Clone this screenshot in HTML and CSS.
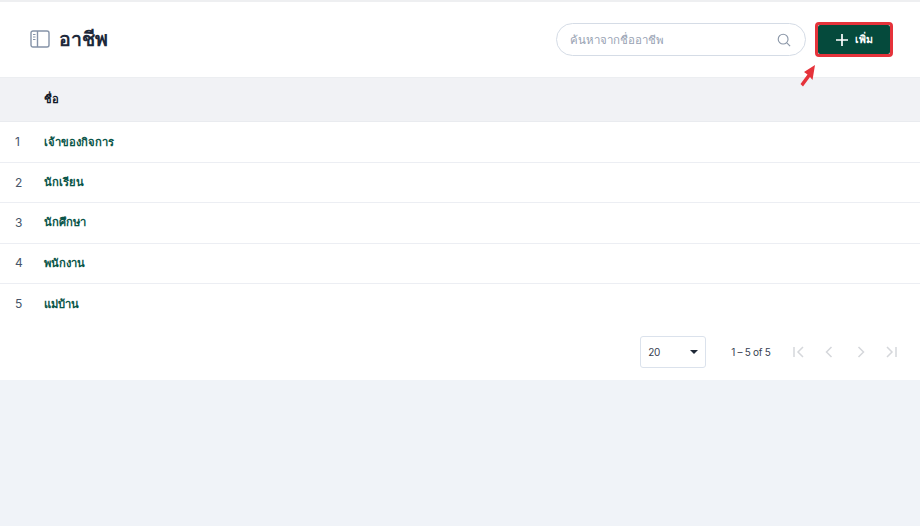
FILE: index.html
```html
<!DOCTYPE html>
<html lang="th">
<head>
<meta charset="utf-8">
<title>อาชีพ</title>
<link rel="stylesheet" href="styles.css">
</head>
<body>
<main class="panel">
  <header class="toolbar">
    <div class="title-wrap">
      <svg class="title-icon" width="20" height="18" viewBox="0 0 20 18" fill="none" stroke="#8593a8" stroke-width="1.4">
        <rect x="1" y="1" width="18" height="16" rx="2"/>
        <path d="M7.500 1v16"/>
        <path d="M3 4.500h2.500M3 7h2.500M3 9.500h2.500" stroke-width="1"/>
      </svg>
      <h1 class="title">อาชีพ</h1>
    </div>
    <div class="actions">
      <div class="search">
        <span class="search-text">ค้นหาจากชื่ออาชีพ</span>
        <svg width="14" height="14" viewBox="0 0 16 16" fill="none" stroke="#8b97a8" stroke-width="1.300">
          <circle cx="7" cy="7" r="5.600"/>
          <path d="M11.200 11.200l3.800 3.800"/>
        </svg>
      </div>
      <div class="add-outline">
        <button class="add-btn" type="button">
          <svg width="12" height="12" viewBox="0 0 12 12" stroke="#fff" stroke-width="1.700"><path d="M6 0v12M0 6h12"/></svg>
          <span>เพิ่ม</span>
        </button>
      </div>
    </div>
    <svg class="arrow" width="18" height="26" viewBox="0 0 18 26"><path d="M16 3L5 10 8.500 12.500 1.500 22 4 24.500 11 15 13.500 18z" fill="#e5333b"/></svg>
  </header>
  <div class="thead"><span class="col-num"></span><span class="col-name">ชื่อ</span></div>
  <div class="row first"><span class="col-num">1</span><span class="col-name link">เจ้าของกิจการ</span></div>
  <div class="row"><span class="col-num">2</span><span class="col-name link">นักเรียน</span></div>
  <div class="row"><span class="col-num">3</span><span class="col-name link">นักศึกษา</span></div>
  <div class="row"><span class="col-num">4</span><span class="col-name link">พนักงาน</span></div>
  <div class="row last"><span class="col-num">5</span><span class="col-name link">แม่บ้าน</span></div>
  <footer class="pager">
    <div class="select"><span>20</span><span class="caret"></span></div>
    <span class="range">1 – 5 of 5</span>
    <div class="pager-btns">
      <svg width="14" height="14" viewBox="0 0 14 14"><path d="M3 2v10M12 2L7 7l5 5"/></svg>
      <svg width="14" height="14" viewBox="0 0 14 14"><path d="M9.500 2L4.500 7l5 5"/></svg>
      <svg width="14" height="14" viewBox="0 0 14 14"><path d="M4.500 2l5 5-5 5"/></svg>
      <svg width="14" height="14" viewBox="0 0 14 14"><path d="M11 2v10M2 2l5 5-5 5"/></svg>
    </div>
  </footer>
</main>
</body>
</html>
```
FILE: styles.css
```css
* { box-sizing: border-box; }
html, body { margin: 0; height: 100%; }
body {
  background: #f0f3f8;
  font-family: Inter, "Noto Sans", "Noto Sans CJK SC", sans-serif;
  color: #1f2937;
  overflow: hidden;
}
.panel {
  background: #fff;
  border-top: 2px solid #eeeff1;
}
.toolbar {
  position: relative;
  height: 75px;
  display: flex;
  align-items: center;
  justify-content: space-between;
  padding: 0 27px 0 30px;
}
.title-wrap { display: flex; align-items: center; gap: 9px; margin-top: -2px; }
.title-icon { display: block; margin-top: 1px; }
.title { margin: 0; font-size: 19.500px; font-weight: 700; color: #1e293b; line-height: 28px; }
.actions { display: flex; align-items: center; gap: 9px; }
.search {
  width: 250px;
  height: 33px;
  border: 1px solid #d5dce6;
  border-radius: 17px;
  display: flex;
  align-items: center;
  justify-content: space-between;
  padding: 0 14px 0 13px;
}
.search-text { font-size: 11.500px; color: #98a2b3; }
.add-outline {
  border: 3px solid #e5333b;
  border-radius: 4px;
}
.add-btn {
  display: flex;
  align-items: center;
  justify-content: center;
  gap: 7px;
  width: 72px;
  height: 29px;
  padding: 0;
  border: 0;
  border-radius: 2px;
  background: #054a3c;
  color: #fff;
  font: 700 10.500px Inter, "Noto Sans", sans-serif;
}
.arrow { position: absolute; left: 799px; top: 60px; }
.thead, .row { display: flex; align-items: center; font-size: 11.200px; }
.thead {
  height: 45px;
  padding-bottom: 2px;
  background: #f1f2f5;
  border-top: 1px solid #eceef1;
  border-bottom: 1px solid #e9ebef;
  font-weight: 700;
  color: #111827;
}
.row { height: 40.300px; padding-bottom: 1px; border-bottom: 1px solid #eceef3; }
.row.first { height: 41px; }
.row.last { border-bottom: 0; }
.col-num { width: 44px; padding-left: 15px; color: #475569; font-size: 12px; }
.col-name { flex: 1; }
.link { font-weight: 700; color: #0a5548; }
.pager {
  height: 56px;
  display: flex;
  align-items: center;
  justify-content: flex-end;
  padding: 0 21px 0 0;
  font-size: 10px;
  letter-spacing: -0.3px;
  color: #374151;
}
.select {
  width: 66px;
  height: 32px;
  border: 1px solid #dbe2ec;
  border-radius: 3px;
  display: flex;
  align-items: center;
  justify-content: space-between;
  padding: 0 7px;
}
.caret {
  width: 0;
  height: 0;
  border-left: 4px solid transparent;
  border-right: 4px solid transparent;
  border-top: 4px solid #1f2937;
}
.range { margin-left: 25px; }
.pager-btns { display: flex; gap: 17.500px; margin-left: 20px; }
.pager-btns svg { display: block; fill: none; stroke: #d5d7db; stroke-width: 1.500; }
```
